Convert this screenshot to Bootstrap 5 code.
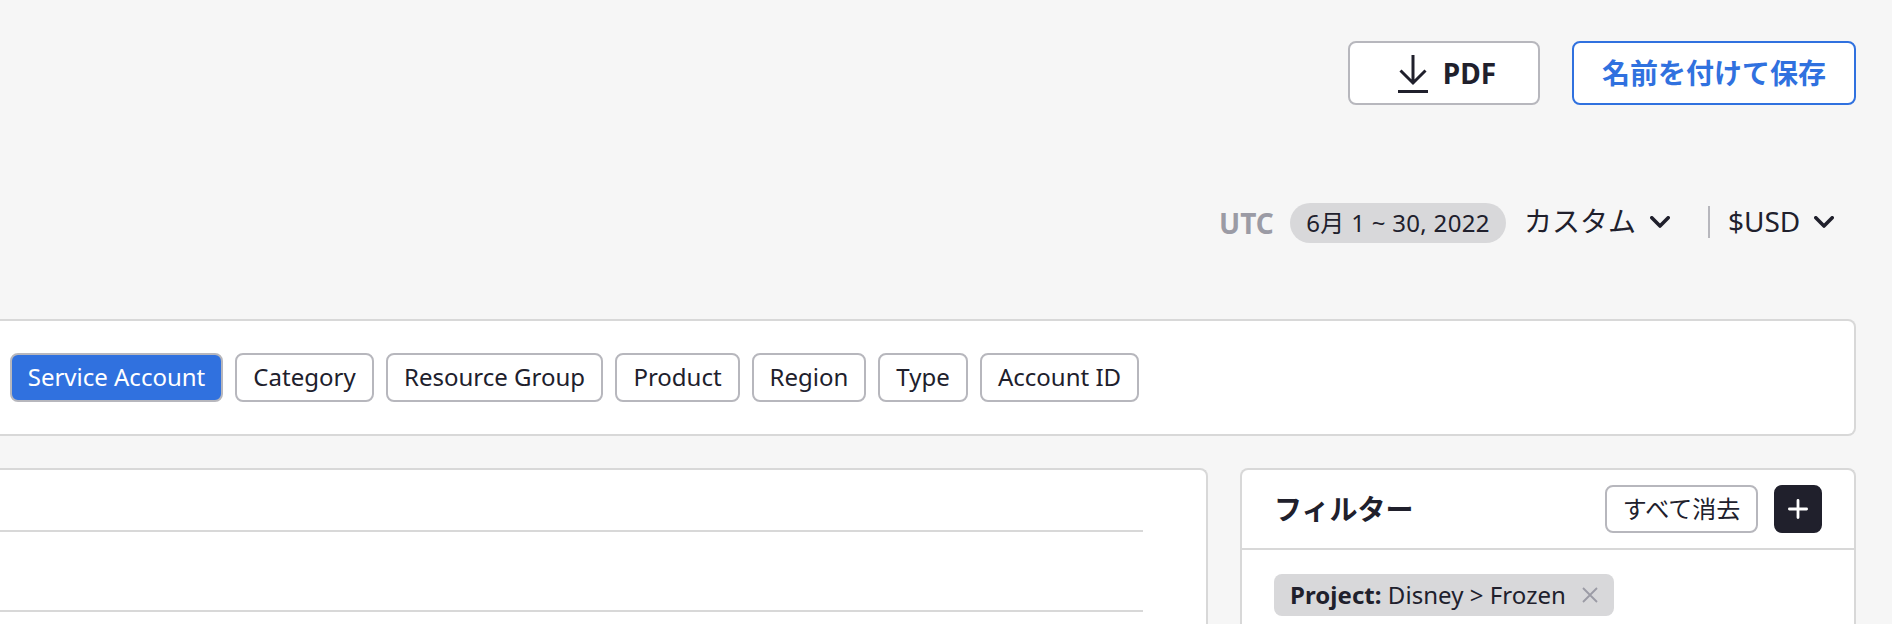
<!DOCTYPE html>
<html lang="ja">
<head>
<meta charset="utf-8">
<meta name="viewport" content="width=device-width, initial-scale=1">
<title>Cost analysis</title>
<link href="https://cdn.jsdelivr.net/npm/bootstrap@5.3.0/dist/css/bootstrap.min.css" rel="stylesheet">
<style>
body{background:#f6f6f6;color:#20202c;font-family:"Noto Sans","Noto Sans CJK JP",sans-serif;font-size:24px;line-height:1;height:624px;overflow:hidden}
svg{flex:none;display:block;fill:none;stroke:currentColor}
.page{height:624px;padding:41px 36px 0 0}
.btn{--bs-btn-color:#20202c;--bs-btn-bg:#fff;--bs-btn-border-color:#b7b7bd;--bs-btn-border-width:2px;--bs-btn-border-radius:8px;--bs-btn-font-size:24px;--bs-btn-line-height:1;--bs-btn-padding-x:0;--bs-btn-padding-y:0;white-space:nowrap}
.btn-lg{--bs-btn-font-size:28px;--bs-btn-font-weight:700;height:64px}
.btn-pdf{width:192px;padding-left:5px}
.btn-pdf svg{margin:2px -1px 0 1px}
.btn-save{--bs-btn-color:#3071df;--bs-btn-border-color:#3071df;width:284px}
.actions{gap:32px}
.toolbar{height:40px;margin-top:98px;padding-right:22px;font-size:28px}
.utc{color:#9b9ba5;width:71px}
.period{background:#d8d8da;width:216px;height:40px;font-size:24px;letter-spacing:.3px}
.range{margin:-4px 0 0 18px;width:126px}
.divider{width:2px;height:32px;background:#b7b7bd;margin:-2px 18px 0 38px}
.currency{width:86px;margin-top:-4px}
.toolbar svg{margin-top:-2px}
.panel{background:#fff;border:2px solid #d8d8d8;border-radius:8px}
.groups{height:117px;margin-top:76px;padding-left:10px;border-left:0;border-radius:0 8px 8px 0;grid-template-columns:213px 139px 217px 125px 114px 90px 159px;column-gap:12px;align-items:center}
.groups .btn{height:49px;padding-bottom:2px}
.groups .active{--bs-btn-active-bg:#3071df;--bs-btn-active-color:#fff;--bs-btn-active-border-color:#b7b7bd}
.lower{margin-top:32px;gap:32px;height:156px}
.chart{border-left:0;border-bottom:0;border-radius:0 8px 0 0;padding:60px 63px 0 0}
.rule{height:2px;background:#d8d8d8}
.rule + .rule{margin-top:78px}
.filters{width:616px;border-bottom:0;border-radius:8px 8px 0 0}
.filters-head{height:80px;border-bottom:2px solid #d8d8d8;padding:0 32px}
.filters-head h2{font-size:28px;font-weight:700;line-height:1}
.btn-clear{width:153px;height:48px}
.btn-plus{--bs-btn-bg:#20202c;--bs-btn-color:#fff;--bs-btn-border-color:#20202c;width:48px;height:48px}
.chip{background:#d8d8da;border-radius:8px;height:42px;width:340px;margin:24px 0 0 32px;padding:0 16px}
.chip svg{color:#9b9ba5}
.chip span{letter-spacing:.05px}
</style>
</head>
<body>
<main class="page d-flex flex-column">
  <div class="actions d-flex justify-content-end">
    <button class="btn btn-lg btn-pdf d-flex align-items-center justify-content-center">
      <svg width="30" height="38" viewBox="0 0 30 38" stroke-width="3"><path d="M15 0v28M2.5 15.5 15 28 27.5 15.5M0 36.5h30"/></svg>
      <span class="ms-3">PDF</span>
    </button>
    <button class="btn btn-lg btn-save">名前を付けて保存</button>
  </div>
  <div class="toolbar d-flex align-items-center justify-content-end">
    <strong class="utc">UTC</strong>
    <span class="period rounded-pill d-flex align-items-center justify-content-center">6月 1 ~ 30, 2022</span>
    <span class="range">カスタム</span>
    <svg width="20" height="12" viewBox="0 0 20 12" stroke-width="3.6" stroke-linecap="round" stroke-linejoin="round"><path d="m1.8 1.8 8.2 8.2 8.2-8.2"/></svg>
    <span class="divider"></span>
    <span class="currency">$USD</span>
    <svg width="20" height="12" viewBox="0 0 20 12" stroke-width="3.6" stroke-linecap="round" stroke-linejoin="round"><path d="m1.8 1.8 8.2 8.2 8.2-8.2"/></svg>
  </div>
  <div class="panel groups d-grid">
    <button class="btn active">Service Account</button>
    <button class="btn">Category</button>
    <button class="btn">Resource Group</button>
    <button class="btn">Product</button>
    <button class="btn">Region</button>
    <button class="btn">Type</button>
    <button class="btn">Account ID</button>
  </div>
  <div class="lower d-flex">
    <section class="panel chart flex-grow-1">
      <div class="rule"></div>
      <div class="rule"></div>
    </section>
    <aside class="panel filters">
      <div class="filters-head d-flex align-items-center">
        <h2 class="mb-0 me-auto">フィルター</h2>
        <button class="btn btn-clear">すべて消去</button>
        <button class="btn btn-plus ms-3 d-flex align-items-center justify-content-center" aria-label="Add">
          <svg width="20" height="20" viewBox="0 0 20 20" stroke-width="2.8" stroke-linecap="round"><path d="M10 1.4v17.2M1.4 10h17.2"/></svg>
        </button>
      </div>
      <div class="chip d-flex align-items-center justify-content-between">
        <span><b>Project:</b> Disney &gt; Frozen</span>
        <svg width="16" height="16" viewBox="0 0 16 16" stroke-width="1.8"><path d="m1 1 14 14M15 1 1 15"/></svg>
      </div>
    </aside>
  </div>
</main>
<script src="https://cdn.jsdelivr.net/npm/bootstrap@5.3.0/dist/js/bootstrap.bundle.min.js"></script>
</body>
</html>
